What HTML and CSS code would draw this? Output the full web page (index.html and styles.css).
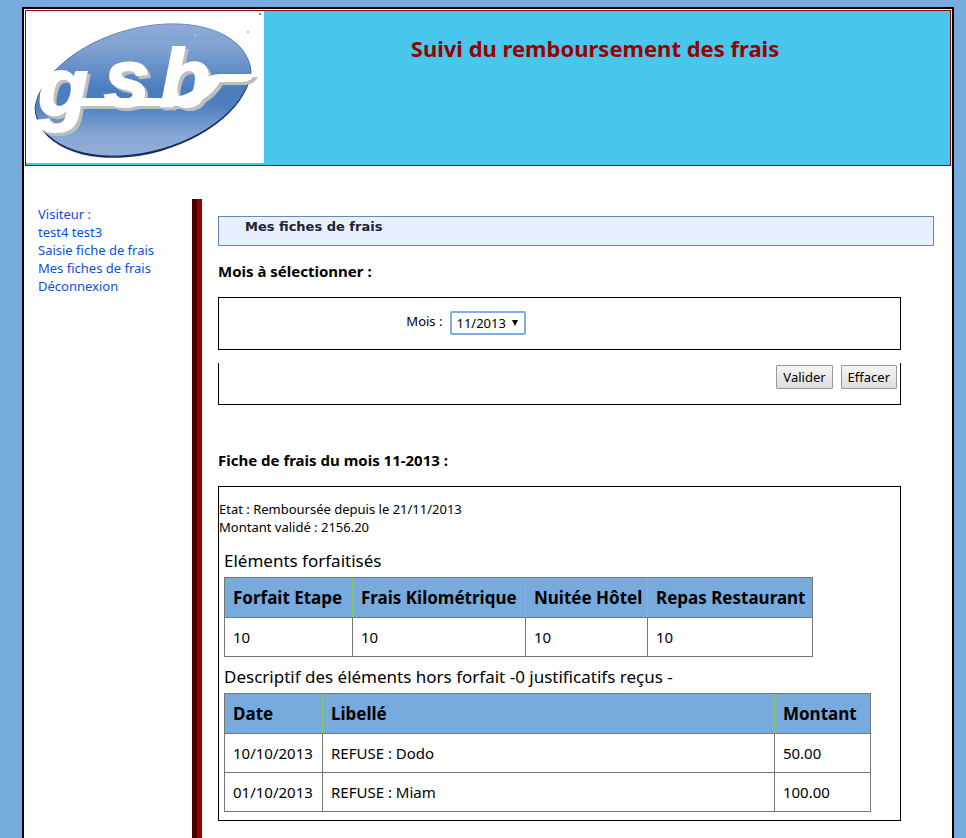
FILE: index.html
```html
<!DOCTYPE html>
<html lang="fr">
<head>
<meta charset="utf-8">
<title>Suivi du remboursement des frais</title>
<link rel="stylesheet" href="styles.css">
</head>
<body>
<div class="page">
  <header class="banner">
    <svg class="logo" viewBox="0 0 238 152" role="img" aria-label="gsb">
      <defs>
        <linearGradient id="oval" x1="0" y1="0" x2="0" y2="1">
          <stop offset="0" stop-color="#8eacd6"/>
          <stop offset=".18" stop-color="#7fa2d1"/>
          <stop offset=".5" stop-color="#4a7cbe"/>
          <stop offset=".62" stop-color="#4e80c0"/>
          <stop offset=".85" stop-color="#89a8d4"/>
          <stop offset="1" stop-color="#91aed8"/>
        </linearGradient>
        <linearGradient id="rim" x1="0" y1="0" x2="0" y2="1">
          <stop offset="0" stop-color="#6f8fbd"/>
          <stop offset=".6" stop-color="#28508c"/>
          <stop offset="1" stop-color="#142c58"/>
        </linearGradient>
      </defs>
      <rect width="238" height="152" fill="#fff"/>
      <path d="M9 98A111 66 -16 0 0 225 63L224 60A111 66 -16 0 1 9 98Z" fill="#142c58"/>
      <path d="M9 97A111 66 -16 0 1 225 61A111 66 -16 0 1 9 97Z" fill="url(#oval)" stroke="url(#rim)"/>
      <g class="lettering">
        <path d="M56 87H140Q166 86 178 69Q184 63 194 63H229Q225 71 216 71H194Q180 94 152 95H54Z"/>
        <text x="12 78 134" y="104 95 95">gsb</text>
      </g>
      <circle cx="234" cy="3" r="1" fill="#555"/>
      <circle cx="222" cy="21" r="1" fill="#aaa"/>
      <circle cx="169" cy="24" r="1" fill="#b5cbe8"/>
    </svg>
    <h1>Suivi du remboursement des frais</h1>
  </header>
  <div class="columns">
    <nav class="menu">
      <ul>
        <li>Visiteur :<br>test4 test3</li>
        <li><a href="#saisie">Saisie fiche de frais</a></li>
        <li><a href="#fiches">Mes fiches de frais</a></li>
        <li><a href="#sortie">Déconnexion</a></li>
      </ul>
    </nav>
    <main class="content">
      <h2>Mes fiches de frais</h2>
      <h3>Mois à sélectionner :</h3>
      <form class="month-form">
        <div class="frame month-row">
          <label for="mois">Mois :</label>
          <span class="picker"><select id="mois"><option>11/2013</option></select></span>
        </div>
        <div class="frame actions">
          <button type="submit">Valider</button>
          <button type="reset">Effacer</button>
        </div>
      </form>
      <h3>Fiche de frais du mois 11-2013 :</h3>
      <section class="frame report">
        <p>Etat : Remboursée depuis le 21/11/2013<br>Montant validé : 2156.20</p>
        <table class="fixed-costs">
          <caption>Eléments forfaitisés</caption>
          <colgroup><col class="w-step"><col class="w-km"><col class="w-night"><col class="w-meal"></colgroup>
          <thead><tr><th>Forfait Etape</th><th>Frais Kilométrique</th><th>Nuitée Hôtel</th><th>Repas Restaurant</th></tr></thead>
          <tbody><tr><td>10</td><td>10</td><td>10</td><td>10</td></tr></tbody>
        </table>
        <table class="other-costs">
          <caption>Descriptif des éléments hors forfait -0 justificatifs reçus -</caption>
          <colgroup><col class="w-date"><col><col class="w-amount"></colgroup>
          <thead><tr><th>Date</th><th>Libellé</th><th>Montant</th></tr></thead>
          <tbody>
            <tr><td>10/10/2013</td><td>REFUSE : Dodo</td><td>50.00</td></tr>
            <tr><td>01/10/2013</td><td>REFUSE : Miam</td><td>100.00</td></tr>
          </tbody>
        </table>
      </section>
    </main>
  </div>
</div>
</body>
</html>
```
FILE: styles.css
```css
* { box-sizing: border-box; }

body {
  margin: 0;
  padding: 7px 12px 0 22px;
  background: #77aadd;
  color: #000;
  font: 13px/18px "Trebuchet MS", "Noto Sans", sans-serif;
}

.page {
  display: flex;
  flex-direction: column;
  min-height: 100vh;
  padding: 1px;
  border: 2px solid #000;
  border-bottom: 0;
  background: #fff;
}

.banner {
  display: flex;
  align-items: flex-start;
  padding-bottom: 2px;
  border: 1px solid #900;
  background: #48c6ec;
}
.logo { flex: none; width: 238px; height: 152px; }
.logo text {
  font: italic bold 82px "Liberation Sans", sans-serif;
  stroke: #fff;
  stroke-width: 2px;
}
.lettering { fill: #fff; filter: drop-shadow(3px 3px 0 #bcbec2); }

h1 {
  flex: 1;
  margin: 0;
  padding: 22px 24px 0 0;
  color: #900;
  font-size: 22px;
  line-height: 30px;
  text-align: center;
}

.columns { display: flex; flex: 1; margin-top: 33px; }

.menu { flex: 0 0 167px; padding: 6px 13px; color: #0a50dc; }
.menu ul { margin: 0; padding: 0; list-style: none; }
.menu a { color: inherit; text-decoration: none; }

.content {
  flex: 1;
  padding: 17px 17px 16px 16px;
  border-left: 10px groove #900;
}

h2 {
  height: 30px;
  margin: 0 0 15px;
  padding-left: 26px;
  border: 1px solid #68b;
  background: #e8f0ff;
  color: #223;
  font: bold 13px/20px Verdana, "DejaVu Sans", sans-serif;
}
h3 { margin: 0 0 16px; font-size: 15px; line-height: 20px; }

.frame { margin-right: 33px; border: 1px solid #000; }

.month-form { margin-bottom: 45px; }
.month-row {
  display: flex;
  justify-content: center;
  gap: 8px;
  height: 53px;
  margin-bottom: 13px;
  padding: 13px 26% 0 0;
}
.month-row label { line-height: 20px; }

.picker { position: relative; height: 24px; }
.picker::after {
  content: "";
  position: absolute;
  top: 9px;
  right: 8px;
  border: 3px solid transparent;
  border-top: 6px solid #000;
  border-bottom: 0;
  pointer-events: none;
}
select {
  width: 76px;
  height: 24px;
  padding: 0 4px;
  appearance: none;
  border: 2px solid #82abeb;
  border-radius: 2px;
  background: #fff;
  color: #000;
  font: inherit;
}

.actions {
  display: flex;
  justify-content: flex-end;
  gap: 8px;
  height: 42px;
  padding: 2px 3px;
  border-top: 0;
}
button {
  height: 24px;
  padding: 0 6px;
  border: 1px solid #999;
  border-radius: 1px;
  background: linear-gradient(#f5f5f5, #ddd);
  color: #000;
  font: inherit;
}

.report { padding: 13px 0 8px; }
.report p { margin: 0 0 12px; }

table { margin: 0 5px; border-collapse: collapse; border: 1px solid #777; table-layout: fixed; }
.fixed-costs { width: 589px; margin-bottom: 7px; }
.other-costs { width: 95%; }
.w-step { width: 128px; }
.w-km { width: 173px; }
.w-night { width: 122px; }
.w-date { width: 98px; }
.w-amount { width: 96px; }
caption { padding-bottom: 3px; font-size: 17px; line-height: 26px; text-align: left; white-space: nowrap; }
th, td { padding: 0 8px; text-align: left; white-space: nowrap; }
th { height: 40px; border: 1px dotted #9c6; background: #77aadd; font-size: 17px; }
td { height: 39px; border: 1px solid #777; font-size: 15px; }
```
